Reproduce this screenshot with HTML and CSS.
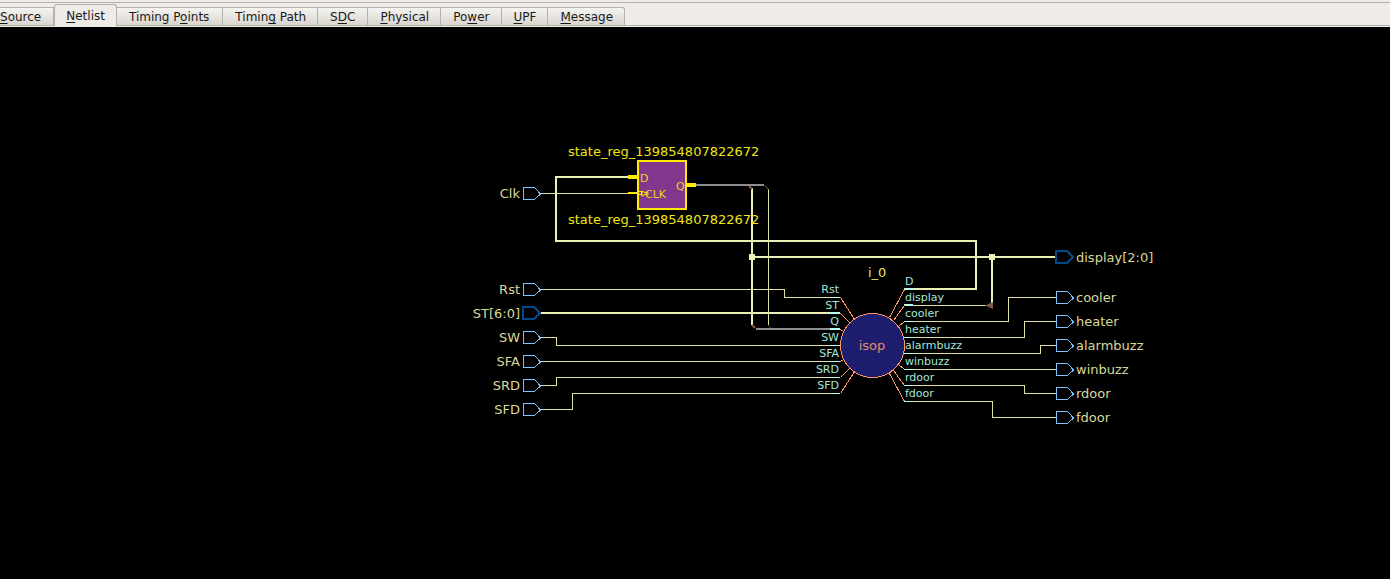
FILE: index.html
```html
<!DOCTYPE html>
<html lang="en">
<head>
<meta charset="utf-8">
<title>Netlist</title>
<link rel="stylesheet" href="styles.css">
</head>
<body>
<nav class="tabs" role="tablist">
  <button class="tab tab-first" role="tab"><u>S</u>ource</button>
  <button class="tab tab-active" role="tab" aria-selected="true"><u>N</u>etlist</button>
  <button class="tab tab-next" role="tab">Timing P<u>o</u>ints</button>
  <button class="tab" role="tab">Timin<u>g</u> Path</button>
  <button class="tab tab-short" role="tab">S<u>D</u>C</button>
  <button class="tab" role="tab"><u>P</u>hysical</button>
  <button class="tab" role="tab">Po<u>w</u>er</button>
  <button class="tab" role="tab"><u>U</u>PF</button>
  <button class="tab" role="tab"><u>M</u>essage</button>
</nav>
<main class="canvas">
<svg class="schematic" viewBox="0 27 1390 552" role="img" aria-label="Netlist schematic">
  <defs>
    <path id="port" d="M0.5 -6.5H11.5L17.5 0L11.5 5.5H0.5Z"/>
    <path id="bus" d="M0 -6H11L17 0L11 6H0Z"/>
  </defs>

  <g class="wire">
    <path d="M541 193.5H629"/>
    <path d="M768.5 189V325"/>
    <path d="M541 289.5H784.5V297.5H831"/>
    <path d="M541 337.5H556.5V345.5H831"/>
    <path d="M541 361.5H831"/>
    <path d="M541 385.5H556.5V377.5H831"/>
    <path d="M541 409.5H572.5V393.5H831"/>
    <path d="M912 305.5H986"/>
    <path d="M913 321.5H1008.5V297.5H1056"/>
    <path d="M913 337.5H1024.5V321.5H1056"/>
    <path d="M913 353.5H1040.5V345.5H1056"/>
    <path d="M913 369.5H1056"/>
    <path d="M913 385.5H1024.5V393.5H1056"/>
    <path d="M913 401.5H992.5V417.5H1056"/>
  </g>
  <g class="wire wire-bus">
    <path d="M628 177H556V241H976V289H913"/>
    <path d="M752 188V325"/>
    <path d="M752 257H1056"/>
    <path d="M992 257V305"/>
    <path d="M541 313H831"/>
  </g>
  <path class="junction" d="M749 254h6v6h-6zM989 254h6v6h-6z"/>
  <path class="ripper-bus" d="M696 185H764M756 329H831"/>
  <path class="ripper" d="M749 186L752 189M752 325L755 328"/>
  <path class="ripper ripper-thin" d="M764.5 185.5L768.5 189.5M768.5 325.5L770.5 327.5"/>
  <path class="ripper-tip" d="M985 305.5L993 302V309Z"/>

  <g class="stub">
    <path d="M830 297.5H840M830 345.5H840M830 361.5H840M830 377.5H840M830 393.5H840"/>
    <path d="M904 321.5H913M904 337.5H913M904 353.5H913M904 369.5H913M904 385.5H913M904 401.5H913"/>
  </g>
  <path class="stub stub-bus" d="M830 313H840M830 329H840M904 289H913M904 305H913"/>

  <g class="spoke">
    <path d="M840.5 297.5L854.5 319.5M840.5 313.5L850.5 323.5M840.5 329.5L843.5 331.5M840.5 361.5L843.5 359.5M840.5 377.5L850.5 367.5M840.5 393.5L854.5 371.5"/>
    <path d="M904.5 289.5L889.5 317.5M904.5 305.5L893.5 320.5M904.5 321.5L898.5 326.5M904.5 369.5L898.5 364.5M904.5 385.5L893.5 370.5M904.5 401.5L889.5 373.5"/>
    <circle class="logic" cx="872.5" cy="345.5" r="32"/>
  </g>

  <g class="port">
    <use href="#port" x="523" y="194"/>
    <use href="#port" x="523" y="290"/>
    <use href="#port" x="523" y="338"/>
    <use href="#port" x="523" y="362"/>
    <use href="#port" x="523" y="386"/>
    <use href="#port" x="523" y="410"/>
    <use href="#port" x="1056" y="298"/>
    <use href="#port" x="1056" y="322"/>
    <use href="#port" x="1056" y="346"/>
    <use href="#port" x="1056" y="370"/>
    <use href="#port" x="1056" y="394"/>
    <use href="#port" x="1056" y="418"/>
  </g>
  <g class="port port-bus">
    <use href="#bus" x="523" y="313"/>
    <use href="#bus" x="1056" y="257"/>
  </g>

  <rect class="cell" x="638" y="161" width="48" height="48"/>
  <path class="cell-pin" d="M628 177H638M686 185H696"/>
  <path class="cell-clock" d="M628 193H638"/>
  <path class="cell-edge" d="M638 191.5H641.5V194.5H638M642 191V196L645 194.5H648V192.5H645Z"/>

  <g class="label label-in">
    <text x="520" y="198">Clk</text>
    <text x="520" y="294">Rst</text>
    <text x="520" y="318">ST[6:0]</text>
    <text x="520" y="342">SW</text>
    <text x="520" y="366">SFA</text>
    <text x="520" y="390">SRD</text>
    <text x="520" y="414">SFD</text>
  </g>
  <g class="label">
    <text x="1076" y="262">display[2:0]</text>
    <text x="1076" y="302">cooler</text>
    <text x="1076" y="326">heater</text>
    <text x="1076" y="350">alarmbuzz</text>
    <text x="1076" y="374">winbuzz</text>
    <text x="1076" y="398">rdoor</text>
    <text x="1076" y="422">fdoor</text>
  </g>
  <g class="pin pin-in">
    <text x="839" y="293">Rst</text>
    <text x="839" y="309">ST</text>
    <text x="839" y="325">Q</text>
    <text x="839" y="341">SW</text>
    <text x="839" y="357">SFA</text>
    <text x="839" y="373">SRD</text>
    <text x="839" y="389">SFD</text>
  </g>
  <g class="pin">
    <text x="905" y="285">D</text>
    <text x="905" y="301">display</text>
    <text x="905" y="317">cooler</text>
    <text x="905" y="333">heater</text>
    <text x="905" y="349">alarmbuzz</text>
    <text x="905" y="365">winbuzz</text>
    <text x="905" y="381">rdoor</text>
    <text x="905" y="397">fdoor</text>
  </g>
  <text class="logic-name" x="872" y="350">isop</text>
  <text class="instance" x="868" y="277">i_0</text>
  <text class="cell-name" x="568" y="156">state_reg_139854807822672</text>
  <text class="cell-name" x="568" y="224">state_reg_139854807822672</text>
  <g class="pin pin-cell">
    <text x="640" y="182">D</text>
    <text x="645" y="198">CLK</text>
    <text x="676" y="190">Q</text>
  </g>
</svg>
</main>
</body>
</html>
```
FILE: styles.css
```css
* { box-sizing: border-box; }

body {
  margin: 0;
  min-height: 100vh;
  display: flex;
  flex-direction: column;
  background: #000;
  font-family: "DejaVu Sans", sans-serif;
}

.tabs {
  display: flex;
  align-items: flex-end;
  height: 27px;
  padding-bottom: 1px;
  background:
    linear-gradient(#b4b1ad, #b4b1ad) 0 2px / 100% 1px no-repeat,
    linear-gradient(#b4b1ad, #b4b1ad) 0 25px / 100% 1px no-repeat,
    #efebe7;
}

.tab {
  flex: none;
  height: 19px;
  padding: 1px 11px 0 12px;
  border: solid #b4b1ad;
  border-width: 1px 1px 1px 0;
  background: linear-gradient(#f5f3f0, #d9d6d0);
  color: #1a1a1a;
  font: 12px/16px "DejaVu Sans", sans-serif;
  white-space: nowrap;
}

.tab u { text-underline-offset: 2px; text-decoration-thickness: 1px; text-decoration-skip-ink: none; }
.tab-first { padding-left: 0; padding-right: 12px; }
.tab-next { padding-right: 13px; }
.tab-short { padding-right: 12px; }
.tab:last-child { border-top-right-radius: 3px; }

.tab-active {
  height: 22px;
  padding: 1px 11px 0;
  border-width: 1px 1px 0;
  border-radius: 3px 3px 0 0;
  background: #efebe7;
  line-height: 20px;
}

.canvas { flex: 1; display: flex; }
.schematic { width: 100%; }

.wire { fill: none; stroke: #e0e09c; stroke-width: 1; shape-rendering: crispEdges; }
.wire-bus { stroke: #ebf0b4; stroke-width: 2; }
.junction { fill: #ebf0b4; }
.ripper-bus { fill: none; stroke: #8e8e8e; stroke-width: 2; }
.ripper { stroke: #805840; stroke-width: 2; }
.ripper-thin { stroke-width: 1; }
.ripper-tip { fill: #805840; }

.stub { stroke: #b4fff0; stroke-width: 1; shape-rendering: crispEdges; }
.stub-bus { stroke-width: 2; }

.spoke { stroke: #ff9664; stroke-width: 1; shape-rendering: crispEdges; }
.logic { fill: #1e1e6e; }
.port { fill: #000; stroke: #78c3ff; stroke-width: 1; shape-rendering: crispEdges; }
.port-bus { stroke: #004b87; stroke-width: 2; }

.cell { fill: #82378c; stroke: #ffeb00; stroke-width: 2; }
.cell-pin { stroke: #ffeb00; stroke-width: 4; }
.cell-clock { stroke: #ffeb00; stroke-width: 2; }
.cell-edge { fill: none; stroke: #ffeb00; stroke-width: 1; }

.label, .instance, .cell-name, .logic-name { font-size: 13px; }
.label { fill: #d8d89a; }
.label-in, .pin-in { text-anchor: end; }
.pin { font-size: 11px; fill: #a5e6d7; }
.pin-cell { fill: #e6d728; }
.logic-name { fill: #e08a70; text-anchor: middle; }
.instance { fill: #e6e664; }
.cell-name { fill: #f0e614; }
```
